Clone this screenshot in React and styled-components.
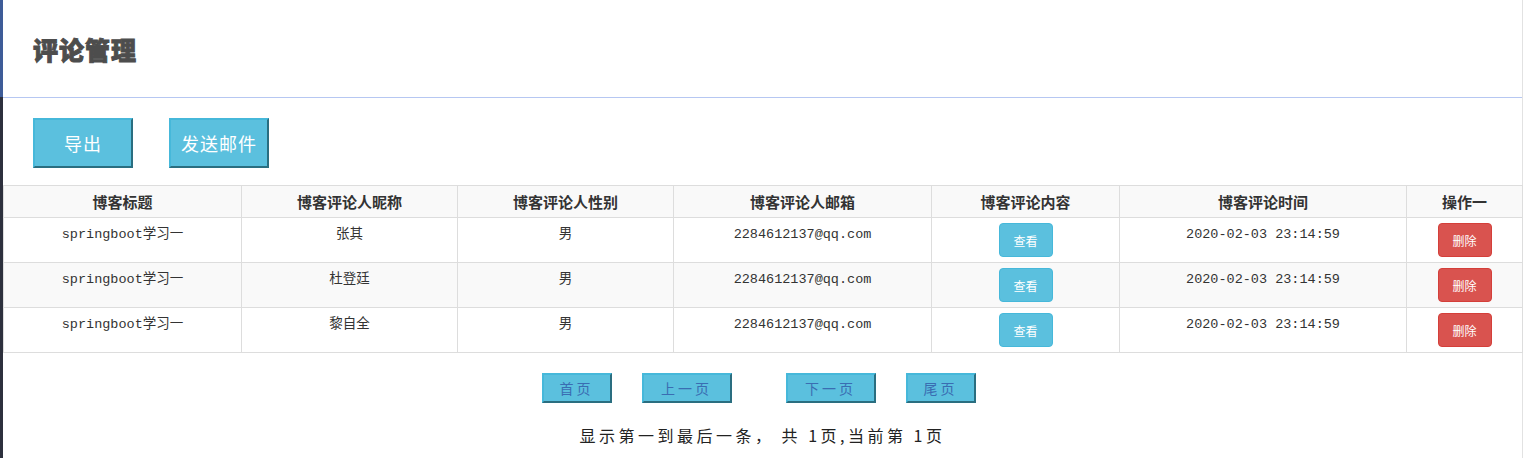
import React from 'react';
import styled, { createGlobalStyle } from 'styled-components';

const GlobalStyle = createGlobalStyle`
  html, body {
    margin: 0;
    padding: 0;
    background: #fff;
  }
  body {
    font-family: "Liberation Mono", "Noto Sans CJK SC", monospace;
    color: #333;
  }
`;

const comments = [
  { title: 'springboot学习一', nick: '张其', sex: '男', email: '2284612137@qq.com', time: '2020-02-03 23:14:59' },
  { title: 'springboot学习一', nick: '杜登廷', sex: '男', email: '2284612137@qq.com', time: '2020-02-03 23:14:59' },
  { title: 'springboot学习一', nick: '黎自全', sex: '男', email: '2284612137@qq.com', time: '2020-02-03 23:14:59' },
];

const columns = [
  { name: '博客标题', width: 238 },
  { name: '博客评论人昵称', width: 216 },
  { name: '博客评论人性别', width: 216 },
  { name: '博客评论人邮箱', width: 258 },
  { name: '博客评论内容', width: 188 },
  { name: '博客评论时间', width: 287 },
  { name: '操作一', width: 116 },
];

const Page = styled.div`
  display: flex;
  min-height: 458px;
`;

const SideStrip = styled.div`
  width: 3px;
  flex-shrink: 0;
  background: linear-gradient(to bottom, #3e5c98 0, #3e5c98 97px, #2d303d 97px);
`;

const Main = styled.div`
  flex: 1;
  min-width: 0;
  border-right: 1px solid #e2e2e2;
`;

const Header = styled.div`
  height: 97px;
  display: flex;
  align-items: center;
  padding-left: 30px;
  border-bottom: 1px solid #b6c7f2;
`;

const Title = styled.h1`
  margin: 0;
  font-family: "Noto Sans CJK SC", sans-serif;
  font-size: 25px;
  font-weight: 900;
  letter-spacing: 1px;
  color: #4d4d4d;
  -webkit-text-stroke: 0.9px #4d4d4d;
`;

const Toolbar = styled.div`
  display: flex;
  gap: 36px;
  padding: 20px 0 17px 30px;
`;

const BlockButton = styled.button`
  box-sizing: border-box;
  width: ${(p) => p.$width}px;
  height: ${(p) => p.$height}px;
  padding: 0;
  background: #5bc0de;
  border-style: solid;
  border-width: 2px;
  border-color: #46b8da #2a6e80 #2a6e80 #46b8da;
  color: ${(p) => (p.$muted ? '#3a6db2' : '#fff')};
  font-family: "Noto Sans CJK SC", serif;
  font-size: ${(p) => p.$size}px;
  letter-spacing: ${(p) => p.$spacing}px;
  cursor: pointer;
`;

const Table = styled.table`
  width: 100%;
  border-collapse: collapse;
  table-layout: fixed;
`;

const Th = styled.th`
  border: 1px solid #ddd;
  background: #f9f9f9;
  padding: 6px 8px;
  font-family: "Noto Sans CJK SC", sans-serif;
  font-size: 15px;
  line-height: 19px;
  font-weight: 700;
  color: #333;
  text-align: center;
`;

const Row = styled.tr`
  background: ${(p) => (p.$striped ? '#f9f9f9' : '#fff')};
`;

const Td = styled.td`
  border: 1px solid #ddd;
  padding: ${(p) => (p.$action ? '5px 8px' : '8px')};
  vertical-align: top;
  text-align: center;
  font-size: 13.5px;
  line-height: 18px;
  color: #333;
`;

const SmallButton = styled.button`
  width: 54px;
  height: 34px;
  padding: 0;
  border: 1px solid ${(p) => (p.$danger ? '#d43f3a' : '#46b8da')};
  border-radius: 4px;
  background: ${(p) => (p.$danger ? '#d9534f' : '#5bc0de')};
  color: #fff;
  font-family: "Noto Sans CJK SC", sans-serif;
  font-size: 12px;
  cursor: pointer;
`;

const Pager = styled.div`
  display: flex;
  justify-content: center;
  padding: 20px 8px 0 0;
`;

const PagerSlot = styled.div`
  margin-left: ${(p) => p.$gap}px;
`;

const Summary = styled.p`
  margin: 20px 0 0;
  text-align: center;
  font-family: "Noto Sans CJK SC", serif;
  font-size: 16px;
  letter-spacing: 3.5px;
  color: #222;
`;

const pages = [
  { label: '首页', width: 70, gap: 0 },
  { label: '上一页', width: 90, gap: 30 },
  { label: '下一页', width: 90, gap: 54 },
  { label: '尾页', width: 70, gap: 30 },
];

export default function App() {
  return (
    <>
      <GlobalStyle />
      <Page>
        <SideStrip />
        <Main>
          <Header>
            <Title>评论管理</Title>
          </Header>
          <Toolbar>
            <BlockButton $width={100} $height={50} $size={18} $spacing={1}>导出</BlockButton>
            <BlockButton $width={100} $height={50} $size={18} $spacing={1}>发送邮件</BlockButton>
          </Toolbar>
          <Table>
            <colgroup>
              {columns.map((c) => (
                <col key={c.name} style={{ width: c.width }} />
              ))}
            </colgroup>
            <thead>
              <tr>
                {columns.map((c) => (
                  <Th key={c.name}>{c.name}</Th>
                ))}
              </tr>
            </thead>
            <tbody>
              {comments.map((item, index) => (
                <Row key={index} $striped={index % 2 === 1}>
                  <Td>{item.title}</Td>
                  <Td>{item.nick}</Td>
                  <Td>{item.sex}</Td>
                  <Td>{item.email}</Td>
                  <Td $action>
                    <SmallButton>查看</SmallButton>
                  </Td>
                  <Td>{item.time}</Td>
                  <Td $action>
                    <SmallButton $danger>删除</SmallButton>
                  </Td>
                </Row>
              ))}
            </tbody>
          </Table>
          <Pager>
            {pages.map((p) => (
              <PagerSlot key={p.label} $gap={p.gap}>
                <BlockButton $width={p.width} $height={30} $size={14} $spacing={3} $muted>
                  {p.label}
                </BlockButton>
              </PagerSlot>
            ))}
          </Pager>
          <Summary>显示第一到最后一条， 共 1页,当前第 1页</Summary>
        </Main>
      </Page>
    </>
  );
}
